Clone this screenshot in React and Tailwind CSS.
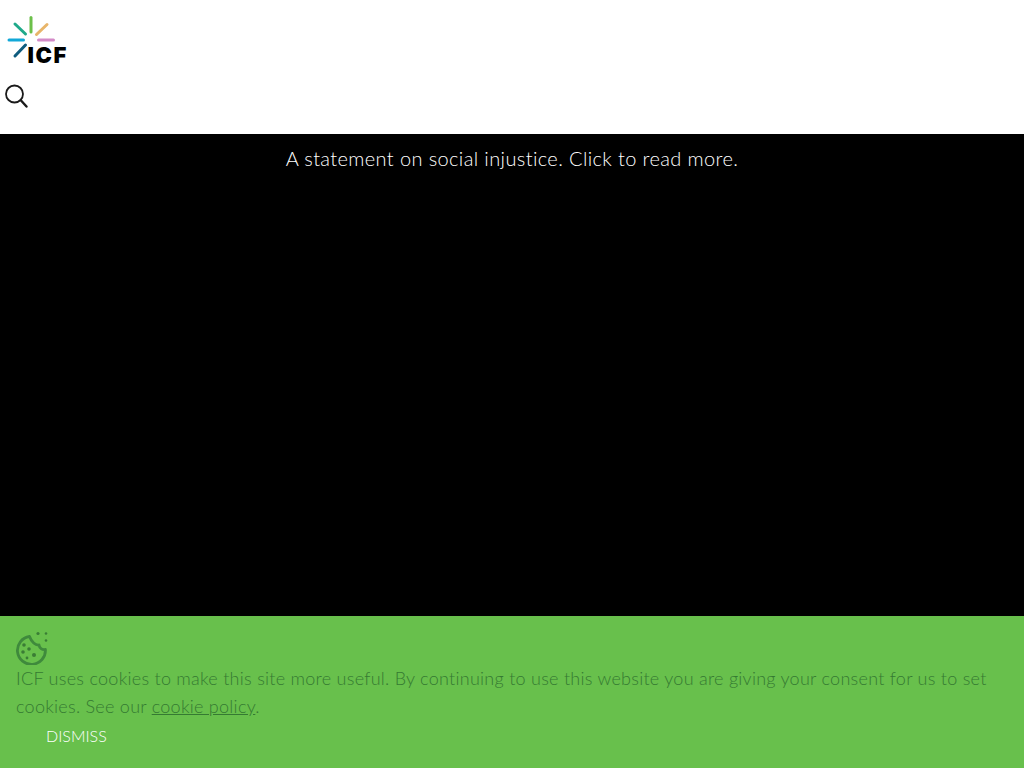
const FONT = 'font-["Lato","Noto_Sans",sans-serif]'

function Logo() {
  return (
    <svg width="72" height="60" viewBox="0 0 72 60" className="block">
      <g strokeWidth="3" strokeLinecap="round" fill="none">
        <path d="M31 7.500V22" stroke="#6cc04a" />
        <path d="M15 14l10.500 10" stroke="#1fa98a" />
        <path d="M47 14.500L36.500 24.500" stroke="#e8b56a" />
        <path d="M38.500 30h15" stroke="#d48bc8" />
        <path d="M9 30h14.500" stroke="#12a8d8" />
        <path d="M15 46l10.500-11" stroke="#0f5c7e" />
      </g>
      <text x="27.500" y="53" fontSize="22" fontWeight="900" fill="#000" fontFamily="Inter, sans-serif" letterSpacing="1.600">ICF</text>
    </svg>
  )
}

function CookieIcon() {
  return (
    <svg width="34" height="34" viewBox="0 0 34 34" fill="#3a7d35" className="-ml-[1px] block">
      <path d="M14.500 5.500A14 14 0 1 0 30.400 18.500C27 19 24.500 17 24 14C20.500 14.500 16.500 11 14.500 5.500Z" fill="none" stroke="#3f8a3c" strokeWidth="2.800" strokeLinejoin="round" />
      <circle cx="23" cy="2.500" r="1.600" />
      <circle cx="31" cy="2.500" r="1.300" />
      <circle cx="31" cy="9.500" r="1.300" />
      <circle cx="9" cy="14" r="1.800" />
      <circle cx="14" cy="18" r="1.800" />
      <circle cx="8" cy="21" r="1.800" />
      <circle cx="19" cy="24" r="2" />
      <circle cx="12" cy="27" r="1.400" />
    </svg>
  )
}

export default function App() {
  return (
    <div className={`${FONT} flex h-screen flex-col overflow-hidden bg-black`}>
      <header className="flex h-[134px] shrink-0 flex-col bg-white">
        <a href="#" className="mt-[10px] block"><Logo /></a>
        <button className="ml-[4px] mt-[14px] w-6 text-[#1a1a1a]">
          <svg width="24" height="24" viewBox="0 0 24 24" fill="none" stroke="currentColor" strokeWidth="1.800" strokeLinecap="round" className="block">
            <circle cx="10.500" cy="10" r="8.500" />
            <path d="M16.800 16.300L22.500 22.500" strokeWidth="2.400" />
          </svg>
        </button>
      </header>

      <main className="min-h-0 flex-1 bg-black pt-[10px] text-center text-[20px] font-light leading-[28px] tracking-[0.38px] text-white">
        <a href="#">A statement on social injustice. Click to read more.</a>
      </main>

      <section className="h-[152px] shrink-0 bg-[#68c04c] px-4 pt-[15px] text-[18px] font-light leading-[28px] tracking-[0.27px] text-[#357a32]">
        <CookieIcon />
        <p className="-mt-[1px]">
          ICF uses cookies to make this site more useful. By continuing to use this website you are giving your consent for us to set cookies. See our <a href="#" className="underline">cookie policy</a>.
        </p>
        <button className="ml-[30px] mt-[2px] text-[16px] leading-[28px] tracking-normal text-white">DISMISS</button>
      </section>
    </div>
  )
}
